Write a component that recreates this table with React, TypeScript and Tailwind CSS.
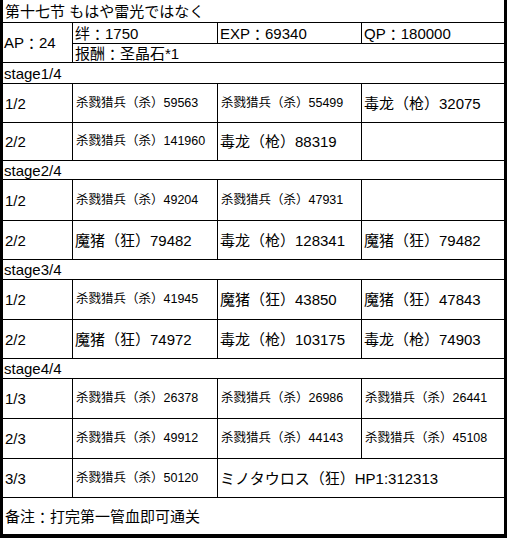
import React from "react";

const F = { fontFamily: '"Liberation Sans", "Noto Sans CJK SC", sans-serif' };

function T({ t }: { t?: string }) {
  if (!t) return null;
  const parts = t.split("：");
  return (
    <>
      {parts.map((p, i) => (
        <React.Fragment key={i}>
          {i > 0 && <span className="font-['Noto_Sans_CJK_TC']">：</span>}
          {p}
        </React.Fragment>
      ))}
    </>
  );
}

type Cell = { t?: string; small?: boolean; span?: number };

const W = [70, 145, 144, 142];

function Row({ h, cells, last }: { h: number; cells: Cell[]; last?: boolean }) {
  let ci = 0;
  return (
    <div className={`flex ${last ? "" : "border-b border-black"}`} style={{ height: h }}>
      {cells.map((c, i) => {
        const span = c.span ?? 1;
        let w = 0;
        for (let k = 0; k < span; k++) w += W[ci + k];
        const isLast = ci + span >= W.length;
        ci += span;
        return (
          <div
            key={i}
            className={`flex items-center leading-none whitespace-nowrap ${isLast ? "" : "border-r border-black"} ${
              c.small ? "text-[12.5px] pl-[3px]" : "text-[15px] pl-[2px]"
            } ${i === 0 ? "pl-[1px]" : ""}`}
            style={{ width: w }}
          >
            {c.t}
          </div>
        );
      })}
    </div>
  );
}

function Stage({ h, t }: { h: number; t: string }) {
  return (
    <div className="flex items-center border-b border-black text-[15px] leading-none pl-[1px]" style={{ height: h }}>
      {t}
    </div>
  );
}

const S = (t: string): Cell => ({ t, small: true });
const B = (t: string): Cell => ({ t });

export default function App() {
  return (
    <div
      className="w-[507px] h-[538px] bg-white text-black border-l-[3px] border-r-[3px] border-b-[4px] border-black"
      style={F}
    >
      <div className="flex items-center h-[23px] border-b border-black text-[15px] leading-none pl-[2px]">
        第十七节 もはや雷光ではなく
      </div>
      <div className="flex h-[40px] border-b border-black">
        <div className="w-[70px] border-r border-black flex items-center text-[15px] leading-none pl-[1px]">
          <T t="AP：24" />
        </div>
        <div className="flex flex-col flex-1">
          <div className="flex h-[21px] border-b border-black">
            <div className="w-[145px] border-r border-black flex items-center text-[15px] leading-none pl-[2px]">
              <T t="绊：1750" />
            </div>
            <div className="w-[144px] border-r border-black flex items-center text-[15px] leading-none pl-[2px]">
              <T t="EXP：69340" />
            </div>
            <div className="w-[142px] flex items-center text-[15px] leading-none pl-[2px]">
              <T t="QP：180000" />
            </div>
          </div>
          <div className="flex flex-1 items-center text-[15px] leading-none pl-[2px]">
            <T t="报酬：圣晶石*1" />
          </div>
        </div>
      </div>
      <Stage h={21} t="stage1/4" />
      <Row h={39} cells={[B("1/2"), S("杀戮猎兵（杀）59563"), S("杀戮猎兵（杀）55499"), B("毒龙（枪）32075")]} />
      <Row h={38} cells={[B("2/2"), S("杀戮猎兵（杀）141960"), B("毒龙（枪）88319"), B("")]} />
      <Stage h={19} t="stage2/4" />
      <Row h={41} cells={[B("1/2"), S("杀戮猎兵（杀）49204"), S("杀戮猎兵（杀）47931"), B("")]} />
      <Row h={39} cells={[B("2/2"), B("魔猪（狂）79482"), B("毒龙（枪）128341"), B("魔猪（狂）79482")]} />
      <Stage h={20} t="stage3/4" />
      <Row h={40} cells={[B("1/2"), S("杀戮猎兵（杀）41945"), B("魔猪（狂）43850"), B("魔猪（狂）47843")]} />
      <Row h={39} cells={[B("2/2"), B("魔猪（狂）74972"), B("毒龙（枪）103175"), B("毒龙（枪）74903")]} />
      <Stage h={20} t="stage4/4" />
      <Row h={40} cells={[B("1/3"), S("杀戮猎兵（杀）26378"), S("杀戮猎兵（杀）26986"), S("杀戮猎兵（杀）26441")]} />
      <Row h={40} cells={[B("2/3"), S("杀戮猎兵（杀）49912"), S("杀戮猎兵（杀）44143"), S("杀戮猎兵（杀）45108")]} />
      <Row h={39} cells={[B("3/3"), S("杀戮猎兵（杀）50120"), { t: "ミノタウロス（狂）HP1:312313", span: 2 }]} />
      <div className="flex items-center h-[36px] text-[15px] leading-none pl-[2px]">
        <T t="备注：打完第一管血即可通关" />
      </div>
    </div>
  );
}
